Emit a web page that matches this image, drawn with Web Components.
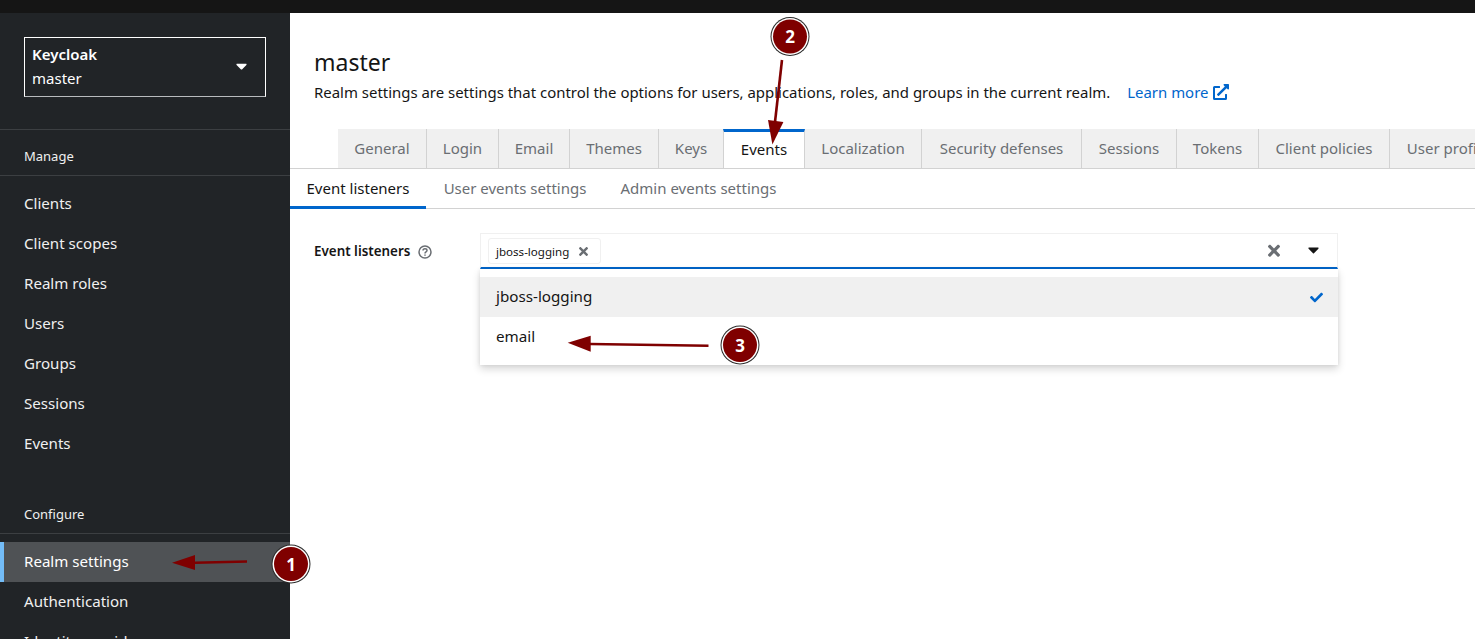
<!doctype html>
<html>
<head>
<meta charset="utf-8">
<title>Realm settings</title>
<style>
html, body { margin: 0; height: 100%; overflow: hidden; background: #fff; }
body { font-family: "Noto Sans", "Open Sans", "Liberation Sans", sans-serif; font-size: 16px; color: #151515; }
</style>
</head>
<body>
<kc-app>
  <kc-sidebar slot="side">
    <kc-realm-select name="Keycloak" realm="master"></kc-realm-select>
    <kc-nav-group title="Manage" class="first">
      <kc-nav-item>Clients</kc-nav-item>
      <kc-nav-item>Client scopes</kc-nav-item>
      <kc-nav-item>Realm roles</kc-nav-item>
      <kc-nav-item>Users</kc-nav-item>
      <kc-nav-item>Groups</kc-nav-item>
      <kc-nav-item>Sessions</kc-nav-item>
      <kc-nav-item>Events</kc-nav-item>
    </kc-nav-group>
    <kc-nav-group title="Configure">
      <kc-nav-item current>Realm settings</kc-nav-item>
      <kc-nav-item>Authentication</kc-nav-item>
      <kc-nav-item>Identity providers</kc-nav-item>
    </kc-nav-group>
  </kc-sidebar>
  <kc-page-head title="master">
    Realm settings are settings that control the options for users, applications, roles, and groups in the current realm.
  </kc-page-head>
  <kc-tabs>
    <kc-tab w="89">General</kc-tab>
    <kc-tab w="72">Login</kc-tab>
    <kc-tab w="71">Email</kc-tab>
    <kc-tab w="89">Themes</kc-tab>
    <kc-tab w="65">Keys</kc-tab>
    <kc-tab w="81" active>Events</kc-tab>
    <kc-tab w="117">Localization</kc-tab>
    <kc-tab w="160">Security defenses</kc-tab>
    <kc-tab w="95">Sessions</kc-tab>
    <kc-tab w="82">Tokens</kc-tab>
    <kc-tab w="131">Client policies</kc-tab>
    <kc-tab w="117">User profile</kc-tab>
  </kc-tabs>
  <kc-subtabs>
    <kc-subtab w="136" active>Event listeners</kc-subtab>
    <kc-subtab w="178">User events settings</kc-subtab>
    <kc-subtab w="189">Admin events settings</kc-subtab>
  </kc-subtabs>
  <kc-field label="Event listeners">
    <kc-select chip="jboss-logging">
      <kc-option selected>jboss-logging</kc-option>
      <kc-option>email</kc-option>
    </kc-select>
  </kc-field>
</kc-app>
<kc-marks></kc-marks>

<script>
const times = '<svg viewBox="0 0 352 512" fill="currentColor"><path d="M242.72 256l100.07-100.07c12.28-12.28 12.28-32.19 0-44.48l-22.24-22.24c-12.28-12.28-32.19-12.28-44.48 0L176 189.28 75.93 89.21c-12.28-12.28-32.19-12.28-44.48 0L9.21 111.45c-12.28 12.28-12.28 32.19 0 44.48L109.28 256 9.21 356.07c-12.28 12.28-12.28 32.19 0 44.48l22.24 22.24c12.28 12.28 32.2 12.28 44.48 0L176 322.72l100.07 100.07c12.28 12.28 32.2 12.28 44.48 0l22.24-22.24c12.28-12.28 12.28-32.19 0-44.48L242.72 256z"/></svg>'
const caret = '<svg viewBox="0 0 320 512" fill="currentColor"><path d="M31.3 192h257.3c17.8 0 26.7 21.5 14.1 34.1L174.1 354.8c-7.8 7.8-20.5 7.8-28.3 0L17.2 226.1C4.6 213.5 13.5 192 31.3 192z"/></svg>'
const check = '<svg viewBox="0 0 512 512" fill="currentColor"><path d="M173.898 439.404l-166.4-166.4c-9.997-9.997-9.997-26.206 0-36.204l36.203-36.204c9.997-9.998 26.207-9.998 36.204 0L192 312.69 432.095 72.596c9.997-9.997 26.207-9.997 36.204 0l36.203 36.204c9.997 9.997 9.997 26.206 0 36.204l-294.4 294.401c-9.998 9.997-26.207 9.997-36.204-.001z"/></svg>'
const external = '<svg viewBox="0 0 512 512" fill="currentColor"><path d="M432 320h-32a16 16 0 0 0-16 16v112H64V128h144a16 16 0 0 0 16-16V80a16 16 0 0 0-16-16H48a48 48 0 0 0-48 48v352a48 48 0 0 0 48 48h352a48 48 0 0 0 48-48V336a16 16 0 0 0-16-16zM488 0H360c-21.37 0-32.05 25.91-17 41l35.73 35.73L135 320.37a24 24 0 0 0 0 34L157.67 377a24 24 0 0 0 34 0l243.61-243.68L471 169c15 15 41 4.5 41-17V24a24 24 0 0 0-24-24z"/></svg>'
const help = '<svg viewBox="0 0 14 14" fill="none" stroke="currentColor" stroke-width="1.5"><circle cx="7" cy="7" r="6"/><path d="M5 5.6c0-1.2.9-1.9 2-1.9s2 .7 2 1.7c0 1.5-2 1.5-2 3"/><path d="M7 9.6v1.2"/></svg>'

function define (name, css, html, init) {
  customElements.define(name, class extends HTMLElement {
    constructor () {
      super()
      this.attachShadow({mode: 'open'})
    }

    connectedCallback () {
      const markup = typeof html === 'function' ? html(this) : html
      this.shadowRoot.innerHTML = `<style>${css}</style>${markup}`
      if (init) init(this)
    }
  })
}

define('kc-app', `
  :host { display: grid; grid-template-columns: 290px 1fr; height: 639px; padding-top: 13px; box-sizing: border-box; overflow: hidden; position: relative; }
  #bar { position: absolute; top: 0; left: 0; right: 0; height: 13px; background: #151515; }
  #side { min-height: 0; display: block; }
  #main { min-width: 0; overflow: hidden; display: block; }
`, `<div id="bar"></div><div id="side"><slot name="side"></slot></div><div id="main"><slot></slot></div>`)

define('kc-sidebar', `
  :host { display: block; height: 626px; background: #212427; overflow: hidden; }
`, `<slot></slot>`)

define('kc-realm-select', `
  :host { display: block; padding: 24px 24px 32px; border-bottom: 1px solid #3c3f42; }
  #box { display: flex; align-items: center; justify-content: space-between; height: 60px; box-sizing: border-box; padding: 0 18px 2px 7px; border: 1px solid #fff; border-bottom-color: #b8bbbe; color: #fff; }
  b { display: block; font-size: 15px; font-weight: 600; line-height: 24px; }
  span { display: block; font-size: 15px; line-height: 24px; }
  svg { width: 11px; height: 18px; display: block; }
`, el => `<div id="box"><div><b>${el.getAttribute('name')}</b><span>${el.getAttribute('realm')}</span></div>${caret}</div>`)

define('kc-nav-group', `
  :host { display: block; }
  :host(.first) #items { padding-bottom: 24px; }
  h2 { margin: 0; height: 46px; box-sizing: border-box; padding: 16px 24px 0; font-size: 13px; line-height: 20px; font-weight: 400; color: #f0f0f0; border-bottom: 1px solid #3c3f42; }
  #items { padding-top: 8px; }
`, el => `<h2>${el.getAttribute('title')}</h2><div id="items"><slot></slot></div>`)

define('kc-nav-item', `
  :host { display: block; height: 40px; box-sizing: border-box; padding: 0 24px; font-size: 15.1px; line-height: 38px; color: #f0f0f0; white-space: nowrap; position: relative; }
  :host([current]) { background: #4f5255; color: #fff; }
  :host([current])::before { content: ''; position: absolute; left: 0; top: 0; bottom: 0; width: 4px; background: #73bcf7; }
`, `<slot></slot>`)

define('kc-page-head', `
  :host { display: block; height: 116px; box-sizing: border-box; padding: 34px 24px 0; }
  h1 { margin: 0; font-size: 23px; line-height: 30px; font-weight: 400; color: #151515; }
  p { margin: 3px 0 0; font-size: 14.94px; line-height: 24px; display: flex; color: #151515; white-space: nowrap; }
  a { color: #06c; margin-left: 17px; display: inline-flex; align-items: center; gap: 5px; }
  svg { width: 16px; height: 16px; display: block; }
`, el => `<h1>${el.getAttribute('title')}</h1><p><span><slot></slot></span><a>Learn more ${external}</a></p>`)

define('kc-tabs', `
  :host { display: flex; height: 40px; box-sizing: border-box; padding-left: 48px; border-bottom: 1px solid #d2d2d2; overflow: hidden; }
`, `<slot></slot>`)

define('kc-tab', `
  :host { display: block; flex: none; height: 40px; box-sizing: border-box; border-right: 1px solid #d2d2d2; border-bottom: 1px solid #d2d2d2; background: #f0f0f0; color: #6a6e73; font-size: 15px; line-height: 39px; text-align: center; white-space: nowrap; }
  :host([active]) { background: #fff; color: #151515; border-top: 3px solid #06c; border-left: 1px solid #d2d2d2; border-bottom: 0; line-height: 35px; margin-left: -1px; }
`, `<slot></slot>`, el => { el.style.width = (+el.getAttribute('w') + (el.hasAttribute('active') ? 1 : 0)) + 'px' })

define('kc-subtabs', `
  :host { display: flex; height: 40px; box-sizing: border-box; border-bottom: 1px solid #d2d2d2; }
`, `<slot></slot>`)

define('kc-subtab', `
  :host { display: block; flex: none; height: 40px; box-sizing: border-box; color: #6a6e73; font-size: 15px; line-height: 38px; text-align: center; white-space: nowrap; }
  :host([active]) { color: #151515; border-bottom: 3px solid #06c; }
`, `<slot></slot>`, el => { el.style.width = el.getAttribute('w') + 'px' })

define('kc-field', `
  :host { display: flex; padding: 24px 137px 0 24px; }
  label { flex: none; width: 166px; display: flex; align-items: center; height: 36px; font-size: 13.4px; font-weight: 600; gap: 8px; color: #151515; }
  svg { width: 14px; height: 14px; color: #6a6e73; display: block; margin-top: 2px; }
  #ctl { flex: 1; min-width: 0; }
`, el => `<label>${el.getAttribute('label')} ${help}</label><div id="ctl"><slot></slot></div>`)

define('kc-select', `
  :host { display: block; position: relative; }
  #input { display: flex; align-items: center; height: 36px; box-sizing: border-box; border: 1px solid #f0f0f0; border-bottom: 2px solid #06c; padding: 0 18px 0 7px; }
  #chip { display: flex; align-items: center; height: 26px; box-sizing: border-box; border: 1px solid #f0f0f0; border-radius: 3px; padding: 0 12px 0 7px; font-size: 11.55px; gap: 10px; margin-top: 1px; color: #151515; }
  #chip svg { width: 9px; height: 13px; color: #6a6e73; display: block; }
  #clear { margin-left: auto; width: 12px; height: 18px; color: #6a6e73; display: block; }
  #open { margin-left: 28px; width: 11px; height: 18px; color: #151515; display: block; margin-bottom: 2px; }
  #menu { position: absolute; left: 0; right: 0; top: 36px; background: #fff; padding: 8px 0; box-shadow: 0 4px 8px rgba(3,3,3,.16), 0 0 4px rgba(3,3,3,.08); }
`, el => `<div id="input"><div id="chip">${el.getAttribute('chip')} ${times}</div><span id="clear">${times}</span><span id="open">${caret}</span></div><div id="menu"><slot></slot></div>`)

define('kc-option', `
  :host { display: flex; align-items: center; justify-content: space-between; height: 40px; box-sizing: border-box; padding: 0 15px 2px 16px; font-size: 15.2px; color: #151515; }
  :host([selected]) { background: #f0f0f0; }
  svg { width: 13px; height: 13px; color: #06c; display: block; margin-top: 3px; }
`, el => `<span><slot></slot></span>${el.hasAttribute('selected') ? check : ''}`)

define('kc-marks', `
  :host { display: block; position: absolute; left: 0; top: 0; width: 1475px; height: 639px; pointer-events: none; }
  svg { position: absolute; inset: 0; }
  .n { font: 700 17px "Noto Sans", sans-serif; fill: #fff; text-anchor: middle; }
`, `<svg width="1475" height="639" viewBox="0 0 1475 639">
  <g fill="#7f0000">
    <path d="M247 561.5L195 562.7" stroke="#7f0000" stroke-width="2.6" fill="none"/>
    <path d="M172 562.7L195 555L195 570Z"/>
    <path d="M782 60L775 122" stroke="#7f0000" stroke-width="2.6" fill="none"/>
    <path d="M772.4 144.500L768 120L783.400 122Z"/>
    <path d="M708.500 345.700L590 344" stroke="#7f0000" stroke-width="2.6" fill="none"/>
    <path d="M567.700 342.700L590.700 335.700L590.700 351.700Z"/>
  </g>
  <g>
    <circle cx="291" cy="564" r="19.500" fill="#2b2b2b"/><circle cx="291" cy="564" r="18.500" fill="#fff"/><circle cx="291" cy="564" r="17" fill="#7f0000"/>
    <circle cx="790" cy="36.500" r="19.500" fill="#2b2b2b"/><circle cx="790" cy="36.500" r="18.500" fill="#fff"/><circle cx="790" cy="36.500" r="17" fill="#7f0000"/>
    <circle cx="740" cy="345" r="19.500" fill="#2b2b2b"/><circle cx="740" cy="345" r="18.500" fill="#fff"/><circle cx="740" cy="345" r="17" fill="#7f0000"/>
  </g>
  <text class="n" x="291" y="570.500">1</text>
  <text class="n" x="790" y="43">2</text>
  <text class="n" x="740" y="351.500">3</text>
</svg>`)
</script>
</body>
</html>
